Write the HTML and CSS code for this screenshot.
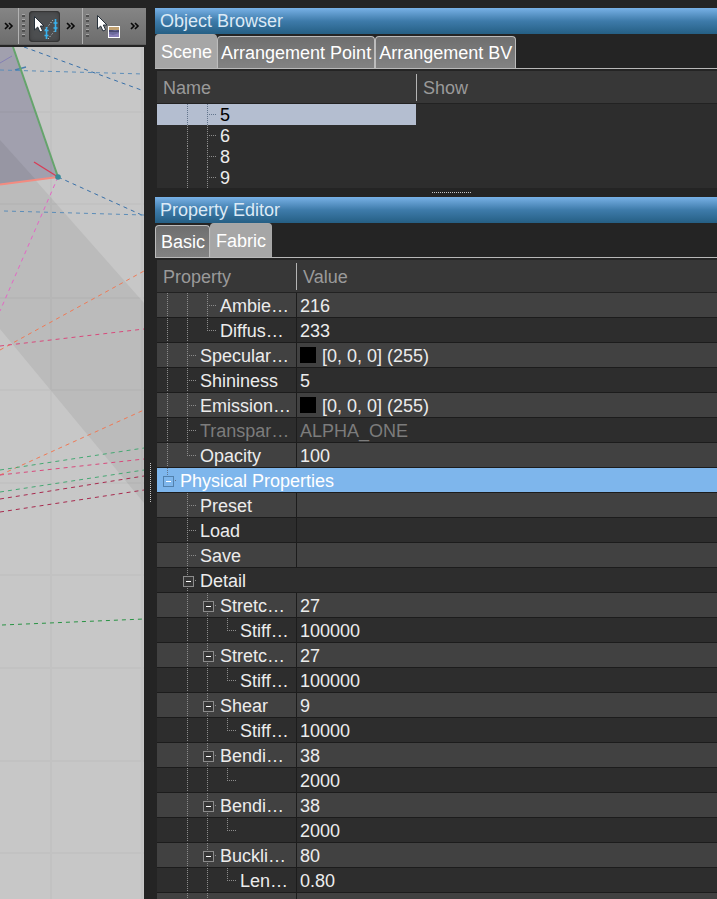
FILE: index.html
```html
<!DOCTYPE html>
<html lang="en">
<head>
<meta charset="utf-8">
<title>Property Editor</title>
<link rel="stylesheet" href="styles.css">
</head>
<body>
<div class="app">
  <section class="workspace">
    <div class="toolbar" role="toolbar">
      <button class="more" type="button">
        <svg width="10" height="8" viewBox="0 0 10 8"><path d="M1 1 4 4 1 7M5 1 8 4 5 7"/></svg>
      </button>
      <span class="divider"></span>
      <span class="grip"></span>
      <button class="tool active" type="button">
        <svg width="31" height="31" viewBox="0 0 31 31">
          <path class="thread" d="M16 19 24 9M19 28 28 17"/>
          <path class="pin" d="M17.500 16v12M15.500 19.500h4M15.500 24.500h4M26.500 8v13M24.500 12h4M24.500 17h4"/>
          <path class="cursor" d="M5.500 5.500V19l3.200-3 2.300 5 2.600-1.200-2.300-4.800H15z"/>
        </svg>
      </button>
      <button class="more" type="button">
        <svg width="10" height="8" viewBox="0 0 10 8"><path d="M1 1 4 4 1 7M5 1 8 4 5 7"/></svg>
      </button>
      <span class="divider"></span>
      <span class="grip"></span>
      <button class="tool" type="button">
        <svg width="31" height="31" viewBox="0 0 31 31">
          <path class="cursor" d="M4.500 4.500V18l3.200-3 2.300 5 2.600-1.200-2.300-4.800H14z"/>
          <rect x="15.500" y="15.500" width="11" height="11" fill="#6c6a9c" stroke="#fff"/>
          <path d="M16 16h10v3H16z" fill="#c0a070"/>
          <path d="M16 19h3l3 1 4-1v2H16z" fill="#4a4a70"/>
          <path d="M16 23l4 1 6-2v4H16z" fill="#8a80b8"/>
        </svg>
      </button>
      <button class="more" type="button">
        <svg width="10" height="8" viewBox="0 0 10 8"><path d="M1 1 4 4 1 7M5 1 8 4 5 7"/></svg>
      </button>
    </div>
    <svg class="canvas" viewBox="0 47 144 852" preserveAspectRatio="xMinYMin slice">
      <rect y="47" width="144" height="852" fill="#c7c7c7"/>
      <path d="M0 140 144 303V503L0 329z" fill="#bbb"/>
      <path d="M0 47H13L58 177 0 184z" fill="#a1a0ae"/>
      <path d="M0 140 36 180 0 184z" fill="#9796a3"/>
      <path class="grid" d="M0 112H144M0 204H144M0 298H144M0 390H144M0 483H144M0 575H144M0 668H144M0 761H144M0 853H144M51 47V899M142 47V899"/>
      <g class="seams">
        <path class="blue" d="M24 47 144 91"/>
        <path class="blue light" d="M0 70 144 74"/>
        <path class="blue" d="M58 177 144 216"/>
        <path class="blue light" d="M4 211 144 215"/>
        <path class="pink" d="M58 177 0 311"/>
        <path class="orange" d="M0 350 144 271"/>
        <path class="rose" d="M0 346 144 329"/>
        <path class="orange" d="M0 475 144 410"/>
        <path class="green" d="M0 470 144 448"/>
        <path class="rose" d="M0 475 144 459"/>
        <path class="green" d="M0 492 144 470"/>
        <path class="maroon" d="M0 499 144 476"/>
        <path class="maroon" d="M0 512 144 490"/>
        <path class="green strong" d="M2 625 144 619"/>
      </g>
      <path d="M0 63 12 56" stroke="#8480b4" fill="none"/>
      <path d="M15 70 26 67" stroke="#477fae" stroke-width="1.500" fill="none"/>
      <path d="M13 47 58 177" stroke="#65a46c" stroke-width="2" fill="none"/>
      <path d="M0 184.500 58 177" stroke="#f38b80" stroke-width="2" fill="none"/>
      <path d="M34 162 58 177" stroke="#d93b55" stroke-width="1.300" fill="none"/>
      <circle cx="58" cy="177" r="2.800" fill="#398a98"/>
    </svg>
  </section>
  <div class="splitter-v"></div>
  <main class="docks">
    <section class="dock">
      <h2 class="dock-title">Object Browser</h2>
      <div class="tabs" role="tablist">
        <button class="tab selected" type="button" role="tab" aria-selected="true">Scene</button>
        <button class="tab" type="button" role="tab">Arrangement Point</button>
        <button class="tab" type="button" role="tab">Arrangement BV</button>
      </div>
      <table class="tree objects">
        <colgroup><col class="name-col"><col></colgroup>
        <thead><tr><th>Name</th><th>Show</th></tr></thead>
        <tbody>
          <tr class="current"><td><div class="node"><i></i><i class="v"></i><i class="t"></i>5</div></td><td></td></tr>
          <tr><td><div class="node"><i></i><i class="v"></i><i class="t"></i>6</div></td><td></td></tr>
          <tr><td><div class="node"><i></i><i class="v"></i><i class="t"></i>8</div></td><td></td></tr>
          <tr><td><div class="node"><i></i><i class="v"></i><i class="t"></i>9</div></td><td></td></tr>
        </tbody>
      </table>
    </section>
    <div class="splitter-h"></div>
    <section class="dock">
      <h2 class="dock-title">Property Editor</h2>
      <div class="tabs" role="tablist">
        <button class="tab" type="button" role="tab">Basic</button>
        <button class="tab selected" type="button" role="tab" aria-selected="true">Fabric</button>
      </div>
      <table class="tree properties">
        <colgroup><col class="property-col"><col></colgroup>
        <thead><tr><th>Property</th><th>Value</th></tr></thead>
        <tbody>
          <tr><td><div class="node"><i class="v"></i><i class="v"></i><i class="t"></i>Ambie…</div></td><td>216</td></tr>
          <tr><td><div class="node"><i class="v"></i><i class="v"></i><i class="l"></i>Diffus…</div></td><td>233</td></tr>
          <tr><td><div class="node"><i class="v"></i><i class="t"></i>Specular…</div></td><td><div class="color"><b></b>[0, 0, 0] (255)</div></td></tr>
          <tr><td><div class="node"><i class="v"></i><i class="t"></i>Shininess</div></td><td>5</td></tr>
          <tr><td><div class="node"><i class="v"></i><i class="t"></i>Emission…</div></td><td><div class="color"><b></b>[0, 0, 0] (255)</div></td></tr>
          <tr class="disabled"><td><div class="node"><i class="v"></i><i class="t"></i>Transpar…</div></td><td>ALPHA_ONE</td></tr>
          <tr><td><div class="node"><i class="v"></i><i class="l"></i>Opacity</div></td><td>100</td></tr>
          <tr class="group"><td colspan="2"><div class="node"><i class="l box"></i>Physical Properties</div></td></tr>
          <tr><td><div class="node"><i></i><i class="t"></i>Preset</div></td><td></td></tr>
          <tr><td><div class="node"><i></i><i class="t"></i>Load</div></td><td></td></tr>
          <tr><td><div class="node"><i></i><i class="t"></i>Save</div></td><td></td></tr>
          <tr><td colspan="2"><div class="node"><i></i><i class="t box"></i>Detail</div></td></tr>
          <tr><td><div class="node"><i></i><i class="v"></i><i class="t box"></i>Stretc…</div></td><td>27</td></tr>
          <tr><td><div class="node"><i></i><i class="v"></i><i class="v"></i><i class="l"></i>Stiff…</div></td><td>100000</td></tr>
          <tr><td><div class="node"><i></i><i class="v"></i><i class="t box"></i>Stretc…</div></td><td>27</td></tr>
          <tr><td><div class="node"><i></i><i class="v"></i><i class="v"></i><i class="l"></i>Stiff…</div></td><td>100000</td></tr>
          <tr><td><div class="node"><i></i><i class="v"></i><i class="t box"></i>Shear</div></td><td>9</td></tr>
          <tr><td><div class="node"><i></i><i class="v"></i><i class="v"></i><i class="l"></i>Stiff…</div></td><td>10000</td></tr>
          <tr><td><div class="node"><i></i><i class="v"></i><i class="t box"></i>Bendi…</div></td><td>38</td></tr>
          <tr><td><div class="node"><i></i><i class="v"></i><i class="v"></i><i class="l"></i></div></td><td>2000</td></tr>
          <tr><td><div class="node"><i></i><i class="v"></i><i class="t box"></i>Bendi…</div></td><td>38</td></tr>
          <tr><td><div class="node"><i></i><i class="v"></i><i class="v"></i><i class="l"></i></div></td><td>2000</td></tr>
          <tr><td><div class="node"><i></i><i class="v"></i><i class="t box"></i>Buckli…</div></td><td>80</td></tr>
          <tr><td><div class="node"><i></i><i class="v"></i><i class="v"></i><i class="l"></i>Len…</div></td><td>0.80</td></tr>
          <tr><td><div class="node"><i></i><i class="v"></i><i class="v"></i></div></td><td></td></tr>
        </tbody>
      </table>
    </section>
  </main>
</div>
</body>
</html>
```
FILE: styles.css
```css
* { box-sizing: border-box; }

body {
  margin: 0;
  background: #242424;
  color: #ececec;
  font: 18px/24px "Liberation Sans", Arial, sans-serif;
}

.app {
  display: flex;
  height: 100vh;
  padding-top: 8px;
  overflow: hidden;
}

button {
  margin: 0;
  padding: 0;
  border: 0;
  background: none;
  color: inherit;
  font: inherit;
}

/* Workspace */
.workspace {
  display: flex;
  flex: 0 0 146px;
  flex-direction: column;
}

.toolbar {
  display: flex;
  align-items: center;
  height: 37px;
  margin-bottom: 2px;
  background: linear-gradient(#858585, #6d6d6d);
  border-bottom: 1px solid #606060;
}

.more {
  display: flex;
  flex: 0 0 22px;
  align-items: center;
  justify-content: center;
}

.more:first-child { flex-basis: 18px; }
.more path { fill: none; stroke: #080808; stroke-width: 1.6; }

.divider {
  align-self: stretch;
  width: 1px;
  background: #b2b2b2;
}

.grip {
  width: 3px;
  height: 24px;
  margin: 0 4px 0 3px;
  background: repeating-linear-gradient(#a6a6a6 0 1px, #505050 1px 3px, transparent 3px 5px);
}

.tool {
  display: flex;
  width: 31px;
  height: 31px;
  border-radius: 4px;
}

.tool.active {
  background: #4c4e50;
  box-shadow: inset 0 0 0 1px #363636, inset 0 0 4px #303030;
}

.cursor { fill: #fff; stroke: #26303a; stroke-width: 1; }
.pin { fill: none; stroke: #38b2ee; stroke-width: 1.6; }
.thread { fill: none; stroke: #d5e8f2; stroke-width: 1; stroke-dasharray: 1 2; }

.canvas {
  flex: 1;
  min-height: 0;
  width: 144px;
}

.grid { fill: none; stroke: #000; stroke-opacity: .025; stroke-width: 2; }
.seams path { fill: none; stroke-width: 1; stroke-dasharray: 4 4; }
.seams .blue { stroke: #376fa8; }
.seams .light { stroke: #5c8db8; }
.seams .pink { stroke: #e465c5; }
.seams .orange { stroke: #ef7955; }
.seams .rose { stroke: #d84a7c; }
.seams .green { stroke: #45a873; }
.seams .strong { stroke: #299344; }
.seams .maroon { stroke: #a82a4e; }

/* Splitters */
.splitter-v {
  flex: 0 0 9px;
  background: repeating-linear-gradient(#c8c8c8 0 1px, transparent 1px 2px) center 455px / 1px 39px no-repeat;
}

.splitter-h {
  height: 9px;
  background: repeating-linear-gradient(90deg, #c8c8c8 0 1px, transparent 1px 2px) 277px 4px / 39px 1px no-repeat;
}

/* Docks */
.docks { flex: 1; min-width: 0; }

.dock-title {
  height: 26px;
  margin: 0;
  padding-left: 5px;
  background: linear-gradient(#78b1e6, #3e7baa 50%, #255f84);
  color: #dceaf6;
  font-size: 18px;
  font-weight: 400;
  line-height: 26px;
}

.tabs {
  display: flex;
  align-items: flex-end;
  height: 35px;
  border-bottom: 1px solid #b8b8b8;
}

.tab {
  height: 32px;
  padding: 0 3px;
  border: 1px solid #bcbcbc;
  border-width: 1px 1px 0 1px;
  border-radius: 4px 4px 0 0;
  background: linear-gradient(#6f6f6f, #828282);
  color: #fff;
  line-height: 32px;
  white-space: nowrap;
}

.tab.selected {
  height: 34px;
  padding: 0 5px;
  border-color: #a8a8a8;
  background: #a6a6a6;
}

.tab:first-child { padding: 0 4px 0 5px; }

/* Tree tables */
.tree {
  width: calc(100% - 2px);
  margin: 2px 0 0 2px;
  border-spacing: 0;
  table-layout: fixed;
  background: #2d2d2d;
}

.name-col { width: 259px; }
.property-col { width: 139px; }

th {
  height: 33px;
  padding: 2px 0 0 6px;
  border-bottom: 1px solid #222;
  background: #373737;
  color: #9a9a9a;
  font-weight: 400;
  text-align: left;
}

th + th {
  padding-left: 7px;
  background: linear-gradient(#b4b4b4, #b4b4b4) 0 3px / 1px 27px no-repeat #373737;
}

td { padding: 0; white-space: nowrap; }

.objects td { height: 21px; }
.objects .current td:first-child { background: #b4bed0; color: #000; }

.properties td {
  height: 25px;
  border-bottom: 1px solid #1c1c1c;
}

.properties td + td {
  padding: 2px 0 0 3px;
  border-left: 1px solid #1c1c1c;
  line-height: 22px;
}

.properties tbody tr:nth-child(odd) td { background: #414141; }
.properties .disabled { color: #7c7c7c; }
.properties tbody .group td { background: #7eb6ec; color: #fff; }

.node { display: flex; height: 24px; line-height: 26px; }
.objects .node { height: 21px; line-height: 23px; }
.node i:last-of-type { margin-right: 3px; }

/* Branch guides: v passes through, t adds a spur, l ends at the spur */
.node i {
  --dot: #8c8c8c;
  position: relative;
  flex: 0 0 20px;
}

.current .node i, .group .node i { --dot: #62758c; }

.v, .t, .l { background-repeat: no-repeat; }

.v {
  background-image: repeating-linear-gradient(var(--dot) 0 1px, transparent 1px 2px);
  background-position: 10px 0;
  background-size: 1px 100%;
}

.t, .l {
  background-image:
    repeating-linear-gradient(var(--dot) 0 1px, transparent 1px 2px),
    repeating-linear-gradient(90deg, var(--dot) 0 1px, transparent 1px 2px);
  background-position: 10px 0, 10px 12px;
  background-size: 1px 100%, 10px 1px;
}

.objects .t { background-position: 10px 0, 10px 10px; }
.l { background-size: 1px 13px, 10px 1px; }

.box::before {
  content: "";
  position: absolute;
  top: 8px;
  left: 6px;
  width: 9px;
  height: 9px;
  border: 1px solid #8c8c8c;
  background: linear-gradient(#fff, #fff) center / 5px 1px no-repeat #363636;
}

.group .box::before { border-color: #5281ad; background-color: #7eb6ec; }

.color { display: flex; gap: 6px; }
.color b { width: 16px; height: 16px; margin-top: 2px; background: #000; }
```
